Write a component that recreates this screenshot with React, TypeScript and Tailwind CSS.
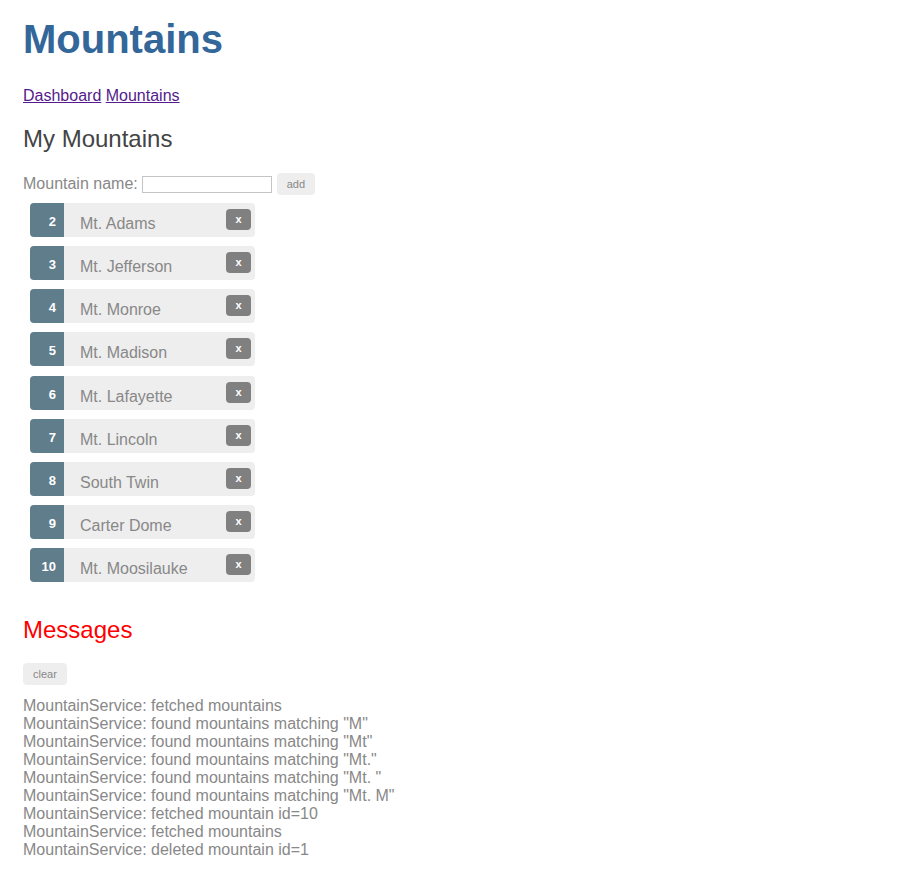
import React from "react";

const mountains = [
  { id: 2, name: "Mt. Adams" },
  { id: 3, name: "Mt. Jefferson" },
  { id: 4, name: "Mt. Monroe" },
  { id: 5, name: "Mt. Madison" },
  { id: 6, name: "Mt. Lafayette" },
  { id: 7, name: "Mt. Lincoln" },
  { id: 8, name: "South Twin" },
  { id: 9, name: "Carter Dome" },
  { id: 10, name: "Mt. Moosilauke" },
];

const messages = [
  "MountainService: fetched mountains",
  'MountainService: found mountains matching "M"',
  'MountainService: found mountains matching "Mt"',
  'MountainService: found mountains matching "Mt."',
  'MountainService: found mountains matching "Mt. "',
  'MountainService: found mountains matching "Mt. M"',
  "MountainService: fetched mountain id=10",
  "MountainService: fetched mountains",
  "MountainService: deleted mountain id=1",
];

export default function App() {
  return (
    <div className="min-h-screen bg-white pl-[23px] pt-[16px] pb-8 font-['Liberation_Sans',Arial,sans-serif] text-[#888]">
      {/* Title */}
      <h1 className="text-[40px] font-bold leading-[46px] text-[#336699]">Mountains</h1>

      {/* Nav */}
      <nav className="mt-[25px] text-[16px] leading-[18px]">
        <a href="#" className="text-[#551a8b] underline">Dashboard</a>{" "}
        <a href="#" className="text-[#551a8b] underline">Mountains</a>
      </nav>

      <h2 className="mt-[20px] text-[24px] leading-[28px] text-[#444]">My Mountains</h2>

      {/* Add form */}
      <div className="mt-[20px] flex h-[22px] items-center">
        <label className="text-[16px] leading-[18px]">Mountain name:</label>
        <input type="text" className="ml-[4px] h-[17px] w-[130px] border border-[#c4c4c4] bg-white" />
        <button type="button" className="ml-[5px] h-[22px] rounded-[4px] bg-[#eee] px-[10px] text-[11px] leading-[22px] text-[#888]">
          add
        </button>
      </div>

      {/* Mountain list */}
      <ul className="ml-[7px] mt-[8px] flex w-[225px] flex-col gap-[9.125px]">
        {mountains.map((m) => (
          <li key={m.id} className="flex h-[34px] items-start rounded-[4px] bg-[#eee]">
            <span className="h-full w-[34px] rounded-l-[4px] bg-[#607d8b] pr-[8px] pt-[12px] text-right text-[13px] font-bold leading-[14px] text-white">
              {m.id}
            </span>
            <span className="ml-[16px] flex-1 pt-[12px] text-[16px] leading-[18px] text-[#888]">{m.name}</span>
            <button type="button" className="mr-[4px] mt-[6px] h-[21px] w-[25px] rounded-[4px] bg-[#808080] text-[11px] font-bold leading-[21px] text-white">
              x
            </button>
          </li>
        ))}
      </ul>

      {/* Messages */}
      <h2 className="mt-[34px] text-[24px] leading-[28px] text-[#ff0000]">Messages</h2>
      <button type="button" className="mt-[19px] h-[22px] rounded-[4px] bg-[#eee] px-[10px] text-[11px] leading-[22px] text-[#888]">
        clear
      </button>
      <div className="mt-[12px] text-[16px] leading-[18px]">
        {messages.map((msg, i) => (
          <div key={i}>{msg}</div>
        ))}
      </div>
    </div>
  );
}
